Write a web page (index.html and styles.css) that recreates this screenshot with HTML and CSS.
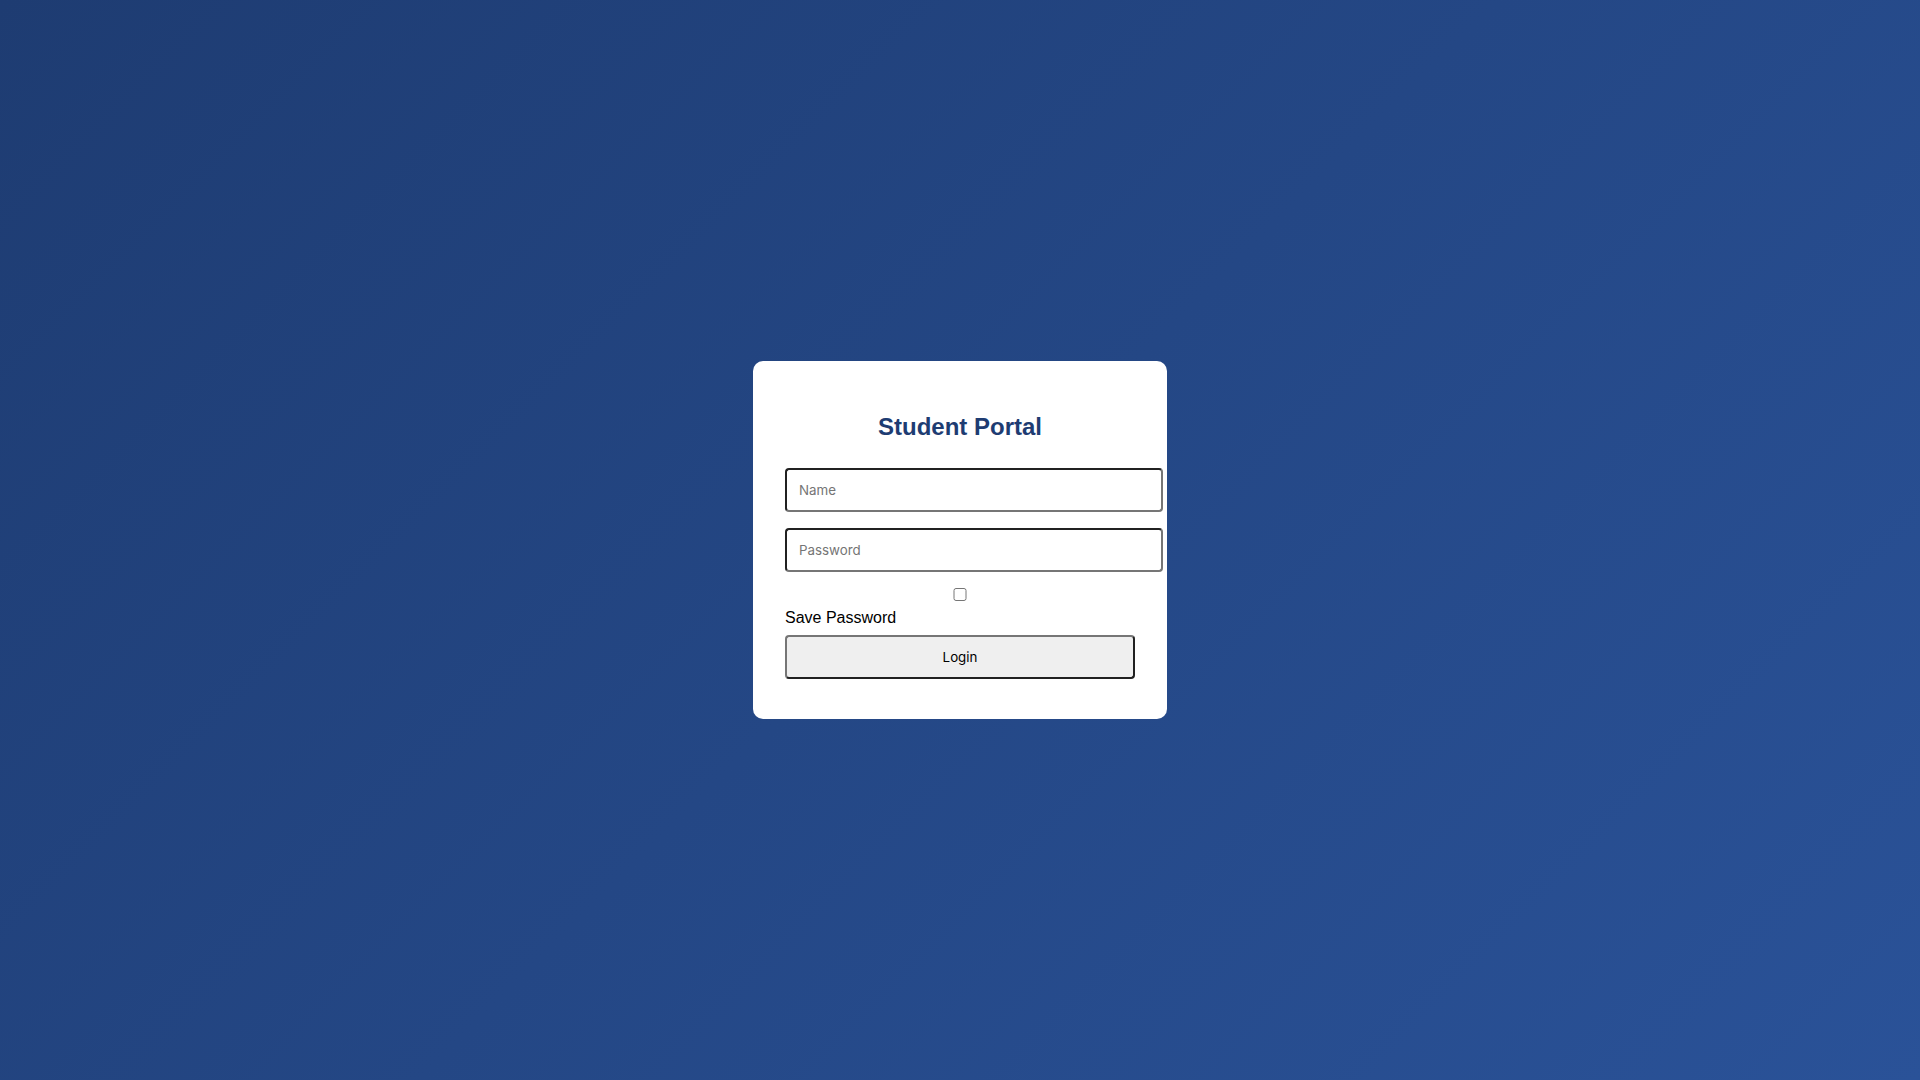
FILE: index.html
```html
<!DOCTYPE html>
<html lang="en">
<head>
<meta charset="utf-8">
<title>Student Portal</title>
<link rel="stylesheet" href="styles.css">
</head>
<body class="page">
<div class="card">
  <h2 class="title">Student Portal</h2>
  <form class="form">
    <input class="field" type="text" placeholder="Name">
    <input class="field" type="password" placeholder="Password">
    <input class="check" type="checkbox" id="save">
    <label class="save-label" for="save">Save Password</label>
    <button class="login" type="button">Login</button>
  </form>
</div>
</body>
</html>
```

FILE: styles.css
```css
html, body {
  height: 100%;
}
.page {
  margin: 0;
  min-height: 100vh;
  display: flex;
  align-items: center;
  justify-content: center;
  background: linear-gradient(135deg, #1e3c72, #2a5298);
  font-family: "Liberation Sans", Arial, sans-serif;
}
.card {
  background: #ffffff;
  padding: 32px;
  border-radius: 10px;
  width: 350px;
}
.title {
  text-align: center;
  color: #1e3c72;
  font-size: 24px;
  font-weight: bold;
  margin: 0.83em 0;
}
.form {
  margin: 0;
}
.field {
  box-sizing: content-box;
  width: 100%;
  padding: 12px;
  margin: 8px 0;
  border: 2px inset #767676;
  border-radius: 4px;
  font-family: Inter, "Noto Sans", sans-serif;
  font-size: 13.3333px;
  background: #ffffff;
  color: #000000;
}
.field::placeholder {
  color: #757575;
}
.check {
  box-sizing: border-box;
  width: 100%;
  padding: 12px;
  margin: 8px 0;
  border-radius: 4px;
}
.save-label {
  font-size: 16px;
  color: #000000;
}
.login {
  box-sizing: border-box;
  width: 100%;
  padding: 12px;
  margin: 8px 0;
  border: 2px outset #767676;
  border-radius: 4px;
  background: #efefef;
  color: #000000;
  font-family: Inter, "Noto Sans", sans-serif;
  font-size: 13.3333px;
}
```
